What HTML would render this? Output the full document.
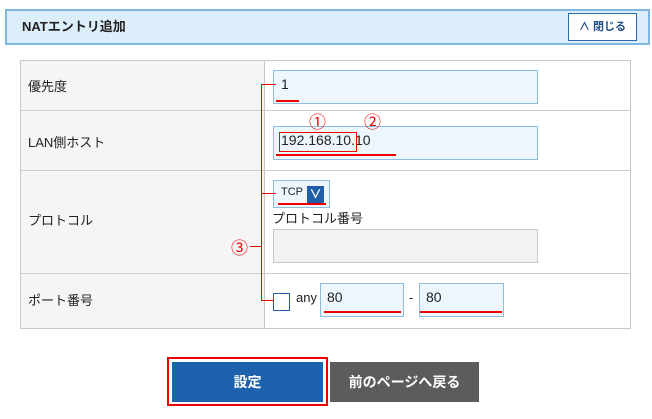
<!DOCTYPE html>
<html><head><meta charset="utf-8"><style>
*{box-sizing:border-box;margin:0;padding:0}
body{width:652px;height:419px;background:#fff;font-family:"Liberation Sans","Noto Sans CJK JP",sans-serif;font-size:13px;color:#222;position:relative;overflow:hidden}
.a{position:absolute}
.hdr{left:5px;top:9px;width:645px;height:36px;background:#ddeefb;border:2px solid #7fb7e0}
.inp{background:#eef6fd;border:1px solid #8cbde0}
.r{background:#e00}
</style></head><body>
<div class="a hdr"></div>
<div class="a" style="left:22px;top:16px;font-weight:bold;font-size:13px">NATエントリ追加</div>
<div class="a" style="left:568px;top:13px;width:69px;height:28px;background:#fff;border:1px solid #2e6ca8;font-size:11px;font-weight:bold;color:#1d4f86;text-align:center;line-height:26px">∧ 閉じる</div>

<div class="a" style="left:20px;top:60px;width:611px;height:269px;border:1px solid #c8c8c8"></div>
<div class="a" style="left:21px;top:61px;width:244px;height:267px;background:#f5f5f5;border-right:1px solid #c8c8c8"></div>
<div class="a" style="left:21px;top:110px;width:609px;height:1px;background:#ccc"></div>
<div class="a" style="left:21px;top:170px;width:609px;height:1px;background:#ccc"></div>
<div class="a" style="left:21px;top:273px;width:609px;height:1px;background:#ccc"></div>
<div class="a" style="left:28px;top:76px">優先度</div>
<div class="a" style="left:28px;top:132px">LAN側ホスト</div>
<div class="a" style="left:28px;top:210px">プロトコル</div>
<div class="a" style="left:28px;top:290px">ポート番号</div>

<div class="a inp" style="left:273px;top:70px;width:265px;height:34px"></div>
<div class="a" style="left:281px;top:76px;font-size:14px">1</div>
<div class="a r" style="left:276px;top:100px;width:23px;height:2px"></div>

<div class="a inp" style="left:273px;top:126px;width:265px;height:34px"></div>
<div class="a" style="left:281px;top:132px;font-size:14px">192.168.10.10</div>
<div class="a" style="left:279px;top:132px;width:78px;height:20px;border:1px solid #e00"></div>
<div class="a r" style="left:276px;top:154px;width:120px;height:2px"></div>
<div class="a" style="left:309px;top:108px;color:#e00;font-size:17px">①</div>
<div class="a" style="left:364px;top:108px;color:#e00;font-size:17px">②</div>

<div class="a inp" style="left:273px;top:180px;width:57px;height:28px"></div>
<div class="a" style="left:281px;top:186px;font-size:11px">TCP</div>
<div class="a" style="left:307px;top:186px;width:17px;height:17px;background:#1f5fa8;color:#fff;font-size:12px;text-align:center;line-height:17px;font-weight:bold">∨</div>
<div class="a r" style="left:278px;top:203px;width:48px;height:2px"></div>
<div class="a" style="left:272px;top:208px">プロトコル番号</div>
<div class="a" style="left:273px;top:229px;width:265px;height:34px;background:#f2f2f2;border:1px solid #c8c8c8"></div>

<div class="a" style="left:273px;top:293px;width:17px;height:18px;border:1px solid #1f5fa8;background:#fff"></div>
<div class="a" style="left:296px;top:290px">any</div>
<div class="a inp" style="left:320px;top:283px;width:84px;height:34px"></div>
<div class="a" style="left:327px;top:289px;font-size:14px">80</div>
<div class="a r" style="left:324px;top:311px;width:77px;height:2px"></div>
<div class="a" style="left:409px;top:290px">-</div>
<div class="a inp" style="left:419px;top:283px;width:85px;height:34px"></div>
<div class="a" style="left:426px;top:289px;font-size:14px">80</div>
<div class="a r" style="left:420px;top:311px;width:82px;height:2px"></div>

<div class="a r" style="left:261px;top:84px;width:1px;height:217px"></div>
<div class="a r" style="left:261px;top:84px;width:15px;height:1px"></div>
<div class="a r" style="left:261px;top:193px;width:15px;height:1px"></div>
<div class="a r" style="left:261px;top:300px;width:12px;height:1px"></div>
<div class="a r" style="left:250px;top:246px;width:11px;height:1px"></div>
<div class="a" style="left:231px;top:234px;color:#e00;font-size:17px">③</div>

<div class="a" style="left:167px;top:357px;width:161px;height:49px;border:2px solid #e00"></div>
<div class="a" style="left:172px;top:362px;width:151px;height:40px;background:#1e62ad;color:#fff;font-weight:bold;font-size:14px;text-align:center;line-height:40px">設定</div>
<div class="a" style="left:330px;top:362px;width:149px;height:40px;background:#5c5c5c;color:#fff;font-weight:bold;font-size:14px;text-align:center;line-height:40px">前のページへ戻る</div>
</body></html>
